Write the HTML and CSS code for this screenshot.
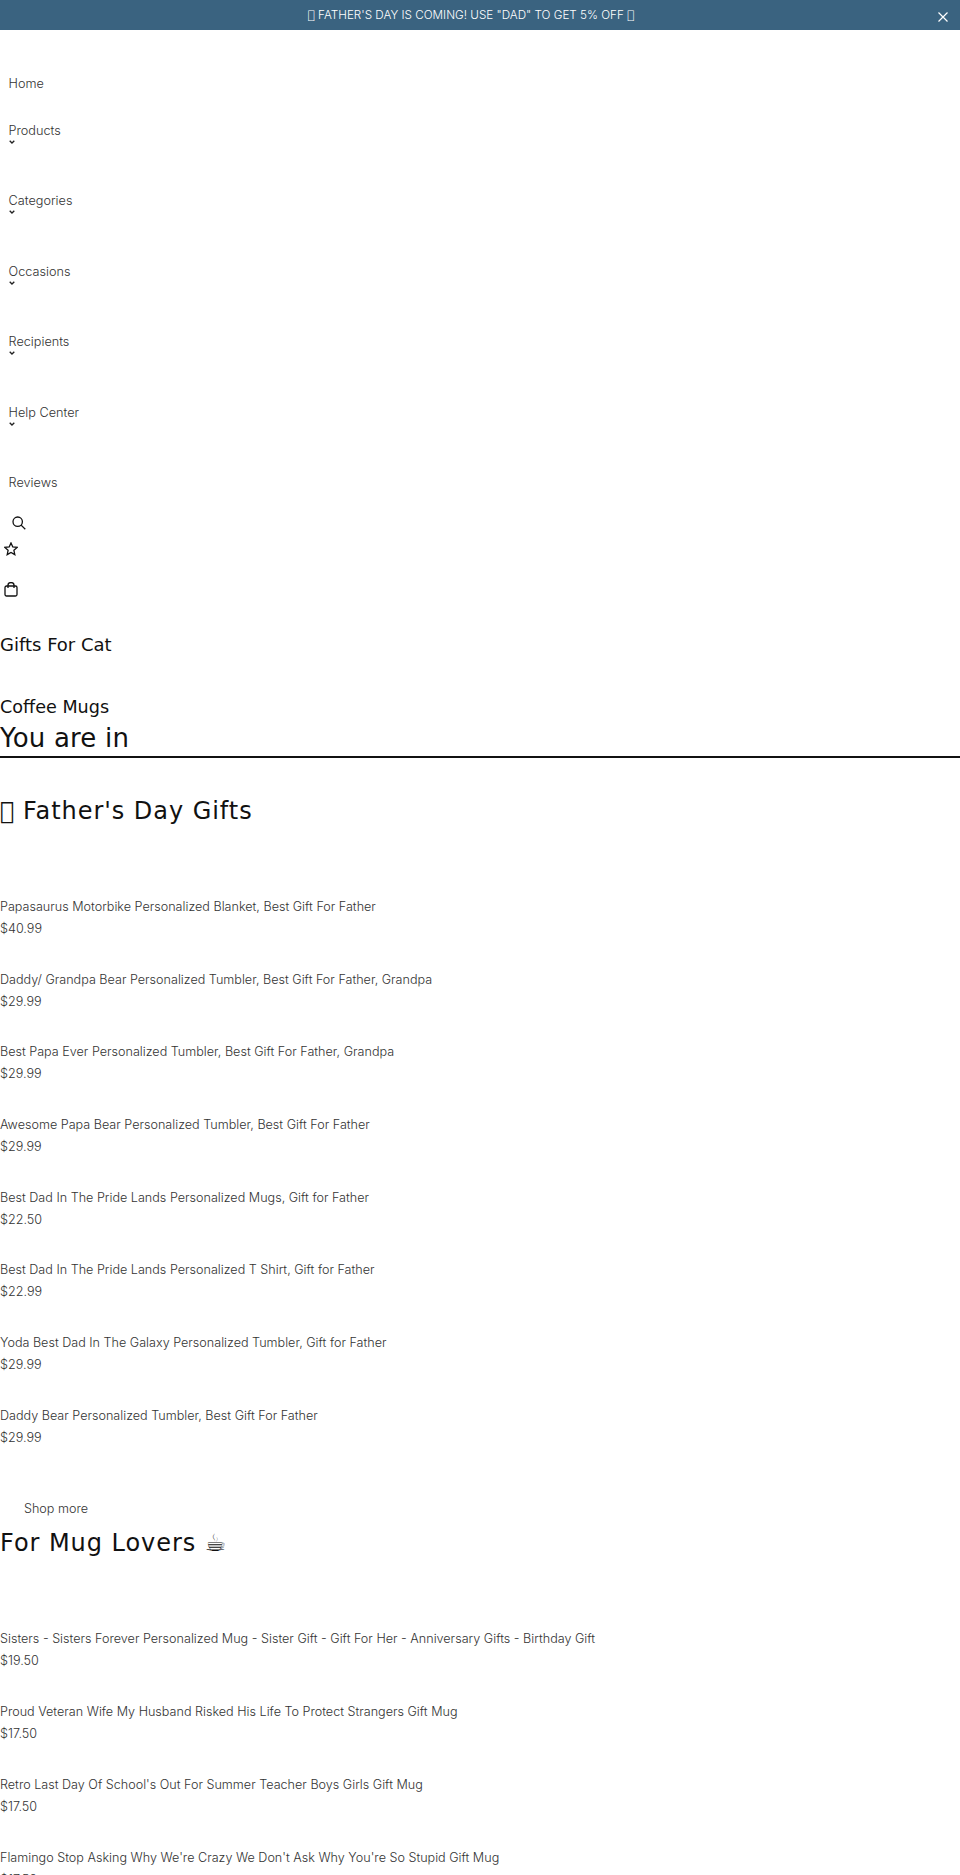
FILE: index.html
```html
<!DOCTYPE html>
<html lang="en">
<head>
    <meta charset="UTF-8">
    <meta name="viewport" content="width=device-width, initial-scale=1.0">
    <title>Gifts For Cat</title>
    <link rel="stylesheet" href="styles.css">
</head>
<body>
    <div class="announcement">
        <p><span class="no-glyph">&#xF0000;</span> FATHER'S DAY IS COMING! USE "DAD" TO GET 5% OFF <span class="no-glyph">&#xF0000;</span></p>
        <svg class="announcement-close" viewBox="0 0 10 10" width="10" height="10"><path d="M0.5 0.5 9.5 9.5M9.5 0.5 0.5 9.5"/></svg>
    </div>

    <nav class="main-nav">
        <a class="nav-item" href="#">Home</a>
        <a class="nav-item has-sub" href="#">Products<svg viewBox="0 0 6 4" width="6" height="4"><path d="M0.7 0.7 3 3 5.3 0.7"/></svg></a>
        <a class="nav-item has-sub" href="#">Categories<svg viewBox="0 0 6 4" width="6" height="4"><path d="M0.7 0.7 3 3 5.3 0.7"/></svg></a>
        <a class="nav-item has-sub" href="#">Occasions<svg viewBox="0 0 6 4" width="6" height="4"><path d="M0.7 0.7 3 3 5.3 0.7"/></svg></a>
        <a class="nav-item has-sub" href="#">Recipients<svg viewBox="0 0 6 4" width="6" height="4"><path d="M0.7 0.7 3 3 5.3 0.7"/></svg></a>
        <a class="nav-item has-sub" href="#">Help Center<svg viewBox="0 0 6 4" width="6" height="4"><path d="M0.7 0.7 3 3 5.3 0.7"/></svg></a>
        <a class="nav-item" href="#">Reviews</a>
    </nav>

    <div class="header-icons">
        <svg class="icon icon-search" viewBox="0 0 14 14" width="14" height="14"><circle cx="5.7" cy="5.7" r="4.7"/><path d="M9.1 9.1 13.3 13.3"/></svg>
        <svg class="icon icon-star" viewBox="0 0 14 14" width="14" height="14"><path d="M7 0.9 8.8 4.9 13.2 5.4 9.9 8.3 10.8 12.6 7 10.4 3.2 12.6 4.1 8.3 0.8 5.4 5.2 4.9Z"/></svg>
        <svg class="icon icon-bag" viewBox="0 0 14 15" width="14" height="15"><rect x="1" y="4" width="12" height="10" rx="1.5"/><path d="M4 6V3a3 2.4 0 0 1 6 0V6"/></svg>
    </div>

    <a class="crumb-title" href="#">Gifts For Cat</a>
    <a class="crumb-sub" href="#">Coffee Mugs</a>
    <h2 class="you-are-in">You are in</h2>

    <section class="collection first">
        <h2><span class="no-glyph">&#xF0000;</span> Father's Day Gifts</h2>
        <div class="product-list">
            <div class="product"><a href="#">Papasaurus Motorbike Personalized Blanket, Best Gift For Father</a><span>$40.99</span></div>
            <div class="product"><a href="#">Daddy/ Grandpa Bear Personalized Tumbler, Best Gift For Father, Grandpa</a><span>$29.99</span></div>
            <div class="product"><a href="#">Best Papa Ever Personalized Tumbler, Best Gift For Father, Grandpa</a><span>$29.99</span></div>
            <div class="product"><a href="#">Awesome Papa Bear Personalized Tumbler, Best Gift For Father</a><span>$29.99</span></div>
            <div class="product"><a href="#">Best Dad In The Pride Lands Personalized Mugs, Gift for Father</a><span>$22.50</span></div>
            <div class="product"><a href="#">Best Dad In The Pride Lands Personalized T Shirt, Gift for Father</a><span>$22.99</span></div>
            <div class="product"><a href="#">Yoda Best Dad In The Galaxy Personalized Tumbler, Gift for Father</a><span>$29.99</span></div>
            <div class="product"><a href="#">Daddy Bear Personalized Tumbler, Best Gift For Father</a><span>$29.99</span></div>
        </div>
        <a class="shop-more" href="#">Shop more</a>
    </section>

    <section class="collection">
        <h2>For Mug Lovers ☕</h2>
        <div class="product-list">
            <div class="product"><a href="#">Sisters - Sisters Forever Personalized Mug - Sister Gift - Gift For Her - Anniversary Gifts - Birthday Gift</a><span>$19.50</span></div>
            <div class="product"><a href="#">Proud Veteran Wife My Husband Risked His Life To Protect Strangers Gift Mug</a><span>$17.50</span></div>
            <div class="product"><a href="#">Retro Last Day Of School's Out For Summer Teacher Boys Girls Gift Mug</a><span>$17.50</span></div>
            <div class="product"><a href="#">Flamingo Stop Asking Why We're Crazy We Don't Ask Why You're So Stupid Gift Mug</a><span>$17.50</span></div>
        </div>
    </section>
</body>
</html>
```

FILE: styles.css
```css
html, body {
    height: 1875px;
    overflow: hidden;
}

body {
    margin: 0;
    font-family: Inter, sans-serif;
    font-size: 12.6px;
    font-weight: 300;
    color: #333;
    background: #fff;
}

a {
    color: inherit;
    text-decoration: none;
}

.no-glyph {
    font-family: "DejaVu Sans", sans-serif;
    letter-spacing: 0;
}

.announcement {
    position: relative;
    box-sizing: border-box;
    height: 30px;
    padding-right: 18px;
    display: flex;
    justify-content: center;
    align-items: center;
    background-color: #3a6380;
    color: #fff;
    font-size: 11.7px;
}

.announcement p {
    margin: 0;
}

.announcement-close {
    position: absolute;
    right: 12px;
    top: 12px;
    fill: none;
    stroke: #fff;
    stroke-width: 1.2;
}

.main-nav {
    padding-top: 36px;
}

.nav-item {
    display: block;
    padding: 10px 8.5px;
    height: 15px;
    font-size: 12.7px;
    line-height: 15px;
    margin-bottom: 12px;
}

.nav-item.has-sub {
    height: 35px;
    margin-bottom: 15.4px;
}

.nav-item svg {
    display: block;
    margin-top: 2px;
    fill: none;
    stroke: #222;
    stroke-width: 1.3;
}

.header-icons {
    display: flex;
    flex-direction: column;
    align-items: flex-start;
    margin-top: 16px;
}

.icon {
    display: block;
    fill: none;
    stroke: #111;
    stroke-width: 1.3;
}

.icon-search {
    margin: 0 0 12px 12px;
}

.icon-star {
    margin: 0 0 26px 4px;
}

.icon-bag {
    margin-left: 4px;
}

.crumb-title,
.crumb-sub {
    display: block;
    color: #111;
    font-family: "DejaVu Sans", sans-serif;
    font-size: 18px;
    font-weight: 400;
    line-height: 22px;
    text-rendering: optimizeLegibility;
}

.crumb-title {
    margin-top: 37px;
}

.crumb-sub {
    margin-top: 40px;
    font-size: 17.6px;
}

.you-are-in,
.collection h2 {
    margin: 0;
    font-family: "DejaVu Sans", sans-serif;
    font-size: 24px;
    font-weight: 400;
    line-height: 36px;
    letter-spacing: 0.95px;
    color: #111;
}

.you-are-in {
    margin-top: 3px;
    font-size: 26px;
    line-height: 35px;
    letter-spacing: 0.2px;
    border-bottom: 2px solid #111;
}

.collection.first {
    padding-top: 35px;
}

.product-list {
    padding-top: 67px;
}

.product {
    height: 72.7px;
    line-height: 22px;
}

.product a,
.product span {
    display: block;
}

.shop-more {
    display: block;
    padding-left: 24px;
    margin: 21px 0 5px;
    line-height: 22px;
}
```
